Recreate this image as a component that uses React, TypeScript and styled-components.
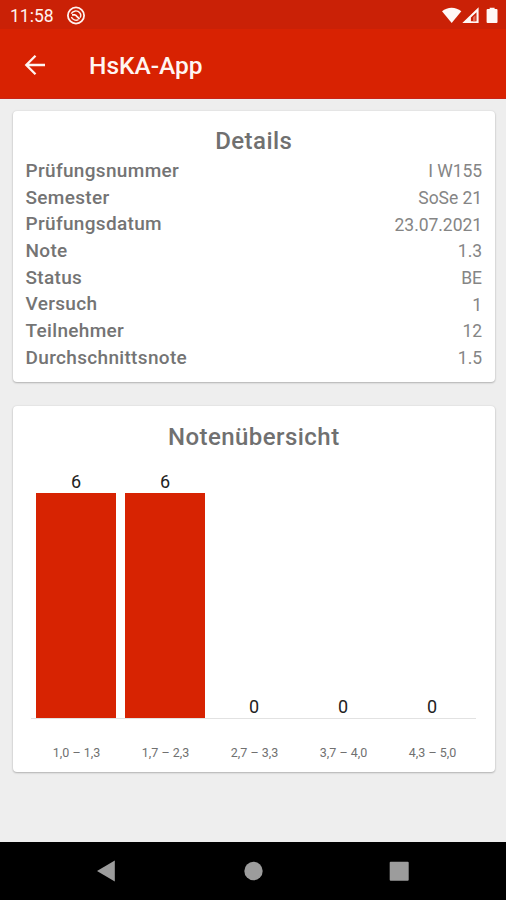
import React from 'react';
import styled, { createGlobalStyle } from 'styled-components';

const GlobalStyle = createGlobalStyle`
  * { box-sizing: border-box; }
  body { margin: 0; font-family: Roboto, sans-serif; background: #eeeeee; }
`;

const Screen = styled.div`
  width: 506px;
  height: 900px;
  display: flex;
  flex-direction: column;
  background: #eeeeee;
  overflow: hidden;
`;

const StatusBar = styled.div`
  height: 29px;
  padding: 3px 7px 0 10px;
  display: flex;
  align-items: center;
  justify-content: space-between;
  background: #ca2106;
  color: #fff3f0;
`;

const StatusGroup = styled.div<{ $gap: number }>`
  display: flex;
  align-items: center;
  gap: ${({ $gap }) => $gap}px;
`;

const Clock = styled.span`
  width: 44px;
  font-size: 17.5px;
  font-weight: 400;
  line-height: 26px;
`;

const AppBar = styled.header`
  height: 70px;
  flex: none;
  padding: 4px 23px 0;
  display: flex;
  align-items: center;
  gap: 42px;
  background: #d82202;
  border-bottom: 1px solid #c92418;
`;

const AppTitle = styled.h1`
  margin: 0;
  padding-top: 1px;
  font-size: 24.5px;
  font-weight: 500;
  line-height: 30px;
  color: #fff5f2;
`;

const Content = styled.main`
  flex: 1;
  padding: 12px 11.5px 0 12.5px;
  display: flex;
  flex-direction: column;
  gap: 24px;
`;

const Card = styled.section<{ $height: number; $top: number }>`
  height: ${({ $height }) => $height}px;
  padding: ${({ $top }) => $top}px 12.5px 0 13px;
  background: #fff;
  border-radius: 4px;
  box-shadow: 0 1px 2px rgba(0, 0, 0, 0.24), 0 0 2px rgba(0, 0, 0, 0.1);
`;

const CardTitle = styled.h2`
  margin: 0;
  font-size: 24px;
  font-weight: 500;
  line-height: 32px;
  letter-spacing: 0.45px;
  text-align: center;
  color: #707070;
`;

const Details = styled.dl`
  margin: 0;
`;

const DetailRow = styled.div`
  height: 26.7px;
  display: flex;
  align-items: center;
  justify-content: space-between;
`;

const Label = styled.dt`
  font-size: 19px;
  font-weight: 500;
  letter-spacing: 0.33px;
  color: #747474;
`;

const Value = styled.dd`
  margin: 0;
  padding-top: 2px;
  font-size: 17.5px;
  letter-spacing: -0.05px;
  color: #858585;
`;

const Plot = styled.div`
  height: 251px;
  margin: 15px 6px 0 5.5px;
  display: grid;
  grid-template-columns: repeat(5, 89px);
  align-items: end;
  border-bottom: 1px solid #e2e2e2;
`;

const BarColumn = styled.div`
  display: flex;
  flex-direction: column;
  align-items: center;
`;

const BarValue = styled.span`
  height: 23px;
  padding-left: 1px;
  font-size: 18px;
  line-height: 23px;
  color: #222;
`;

const Bar = styled.div`
  width: 80px;
  background: #d72302;
`;

const Categories = styled.div`
  margin: 25px 5px 0 6.5px;
  display: grid;
  grid-template-columns: repeat(5, 89px);
  font-size: 12.5px;
  line-height: 18px;
  text-align: center;
  color: #707070;
`;

const NavBar = styled.nav`
  height: 58px;
  flex: none;
  display: flex;
  align-items: center;
  justify-content: center;
  gap: 126px;
  background: #000;
`;

const details = [
  ['Prüfungsnummer', 'I W155'],
  ['Semester', 'SoSe 21'],
  ['Prüfungsdatum', '23.07.2021'],
  ['Note', '1.3'],
  ['Status', 'BE'],
  ['Versuch', '1'],
  ['Teilnehmer', '12'],
  ['Durchschnittsnote', '1.5'],
];

const grades = [
  { range: '1,0 – 1,3', count: 6 },
  { range: '1,7 – 2,3', count: 6 },
  { range: '2,7 – 3,3', count: 0 },
  { range: '3,7 – 4,0', count: 0 },
  { range: '4,3 – 5,0', count: 0 },
];

const PLOT_HEIGHT = 225;
const maxCount = Math.max(...grades.map((g) => g.count));

const SyncIcon = () => (
  <svg width="20" height="20" viewBox="0 0 20 20" fill="none" stroke="currentColor">
    <circle cx="10" cy="9.5" r="8.1" strokeWidth="1.8" />
    <path d="M5.3 7.6C7 4.4 11.500 4 13.800 6.800c1.300 1.500 1.200 3.300.4 4.800" strokeWidth="1.4" />
    <path d="M5.400 11.100c1 2.800 4.400 3.900 7 2.500" strokeWidth="1.4" />
    <path d="M6 8.800h2.700q1.500.2 1.800 1.300l3.100 2.900" strokeWidth="1.8" />
  </svg>
);

const SystemIcons = () => (
  <svg width="57" height="20" viewBox="0 0 57 20" fill="#fff8f6">
    <path d="M0 5.3C5.5.4 13.8.4 19.3 5.3L9.7 17.1Z" />
    <path fillRule="evenodd" d="M20.3 17.1 36.6 1.3V17.1ZM28.9 15.3H34.5V6.3L28.9 11.5Z" />
    <path d="M31 15.3V11.3L33.5 9.3V15.3Z" fill="#e46b58" />
    <path d="M45.6 3.1h2.1V1.7h4.9v1.4H54.5q1 0 1 1v12q0 1-1 1H45.6q-1 0-1-1v-12q0-1 1-1Z" />
  </svg>
);

export default function App() {
  return (
    <>
      <GlobalStyle />
      <Screen>
        <StatusBar>
          <StatusGroup $gap={12}>
            <Clock>11:58</Clock>
            <SyncIcon />
          </StatusGroup>
          <SystemIcons />
        </StatusBar>
        <AppBar>
          <svg width="24" height="24" viewBox="0 0 24 24" fill="none" stroke="#fff5f2" strokeWidth="2.3">
            <path d="M22 11H3.5M12.5 1.800 3.3 11l9.2 9.2" />
          </svg>
          <AppTitle>HsKA-App</AppTitle>
        </AppBar>
        <Content>
          <Card $height={271} $top={14}>
            <CardTitle>Details</CardTitle>
            <Details>
              {details.map(([label, value]) => (
                <DetailRow key={label}>
                  <Label>{label}</Label>
                  <Value>{value}</Value>
                </DetailRow>
              ))}
            </Details>
          </Card>
          <Card $height={365.5} $top={15}>
            <CardTitle>Notenübersicht</CardTitle>
            <Plot>
              {grades.map(({ range, count }) => (
                <BarColumn key={range}>
                  <BarValue>{count}</BarValue>
                  <Bar style={{ height: (count / maxCount) * PLOT_HEIGHT }} />
                </BarColumn>
              ))}
            </Plot>
            <Categories>
              {grades.map(({ range }) => (
                <span key={range}>{range}</span>
              ))}
            </Categories>
          </Card>
        </Content>
        <NavBar>
          <svg width="20" height="22" viewBox="0 0 20 22" fill="#9c9c9c">
            <path d="M0 11 17.8.5v21Z" />
          </svg>
          <svg width="20" height="20" viewBox="0 0 20 20" fill="#9c9c9c">
            <circle cx="10.5" cy="10" r="9.2" />
          </svg>
          <svg width="20" height="20" viewBox="0 0 20 20" fill="#9c9c9c">
            <rect x=".7" y=".7" width="19" height="19" rx="1" />
          </svg>
        </NavBar>
      </Screen>
    </>
  );
}
